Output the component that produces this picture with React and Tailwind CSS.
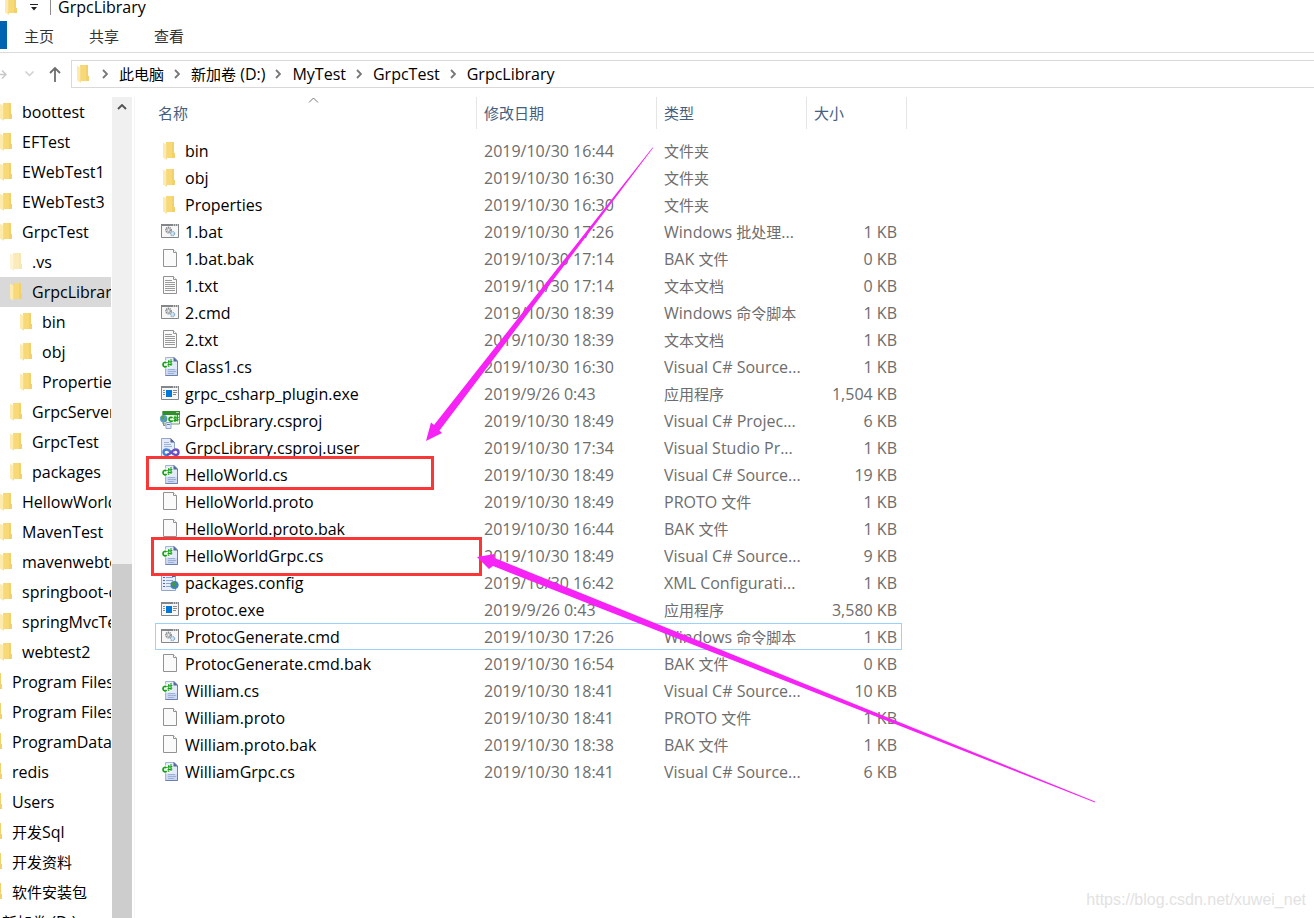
import clsx from "clsx";

const tree = [
  { name: "boottest", level: 1 },
  { name: "EFTest", level: 1 },
  { name: "EWebTest1", level: 1 },
  { name: "EWebTest3", level: 1 },
  { name: "GrpcTest", level: 1 },
  { name: ".vs", level: 2, hidden: true },
  { name: "GrpcLibrary", level: 2, selected: true },
  { name: "bin", level: 3 },
  { name: "obj", level: 3 },
  { name: "Properties", level: 3 },
  { name: "GrpcServer", level: 2 },
  { name: "GrpcTest", level: 2 },
  { name: "packages", level: 2 },
  { name: "HellowWorld", level: 1 },
  { name: "MavenTest", level: 1 },
  { name: "mavenwebtest", level: 1 },
  { name: "springboot-demo", level: 1 },
  { name: "springMvcTest", level: 1 },
  { name: "webtest2", level: 1 },
  { name: "Program Files", level: 0 },
  { name: "Program Files (x86)", level: 0 },
  { name: "ProgramData", level: 0 },
  { name: "redis", level: 0 },
  { name: "Users", level: 0 },
  { name: "开发Sql", level: 0 },
  { name: "开发资料", level: 0 },
  { name: "软件安装包", level: 0 },
  { name: "新加卷 (D:)", level: -1 },
];

const indents = {
  "-1": "-ml-[23px]",
  0: "-ml-[13px]",
  1: "-ml-[3px]",
  2: "ml-[7px]",
  3: "ml-[17px]",
};

const files = [
  { name: "bin", icon: "folder", date: "2019/10/30 16:44", type: "文件夹", size: "" },
  { name: "obj", icon: "folder", date: "2019/10/30 16:30", type: "文件夹", size: "" },
  { name: "Properties", icon: "folder", date: "2019/10/30 16:30", type: "文件夹", size: "" },
  { name: "1.bat", icon: "script", date: "2019/10/30 17:26", type: "Windows 批处理...", size: "1 KB" },
  { name: "1.bat.bak", icon: "blank", date: "2019/10/30 17:14", type: "BAK 文件", size: "0 KB" },
  { name: "1.txt", icon: "text", date: "2019/10/30 17:14", type: "文本文档", size: "0 KB" },
  { name: "2.cmd", icon: "script", date: "2019/10/30 18:39", type: "Windows 命令脚本", size: "1 KB" },
  { name: "2.txt", icon: "text", date: "2019/10/30 18:39", type: "文本文档", size: "1 KB" },
  { name: "Class1.cs", icon: "cs", date: "2019/10/30 16:30", type: "Visual C# Source...", size: "1 KB" },
  { name: "grpc_csharp_plugin.exe", icon: "exe", date: "2019/9/26 0:43", type: "应用程序", size: "1,504 KB" },
  { name: "GrpcLibrary.csproj", icon: "csproj", date: "2019/10/30 18:49", type: "Visual C# Projec...", size: "6 KB" },
  { name: "GrpcLibrary.csproj.user", icon: "user", date: "2019/10/30 17:34", type: "Visual Studio Pr...", size: "1 KB" },
  { name: "HelloWorld.cs", icon: "cs", date: "2019/10/30 18:49", type: "Visual C# Source...", size: "19 KB" },
  { name: "HelloWorld.proto", icon: "blank", date: "2019/10/30 18:49", type: "PROTO 文件", size: "1 KB" },
  { name: "HelloWorld.proto.bak", icon: "blank", date: "2019/10/30 16:44", type: "BAK 文件", size: "1 KB" },
  { name: "HelloWorldGrpc.cs", icon: "cs", date: "2019/10/30 18:49", type: "Visual C# Source...", size: "9 KB" },
  { name: "packages.config", icon: "config", date: "2019/10/30 16:42", type: "XML Configurati...", size: "1 KB" },
  { name: "protoc.exe", icon: "exe", date: "2019/9/26 0:43", type: "应用程序", size: "3,580 KB" },
  { name: "ProtocGenerate.cmd", icon: "script", date: "2019/10/30 17:26", type: "Windows 命令脚本", size: "1 KB", focused: true },
  { name: "ProtocGenerate.cmd.bak", icon: "blank", date: "2019/10/30 16:54", type: "BAK 文件", size: "0 KB" },
  { name: "William.cs", icon: "cs", date: "2019/10/30 18:41", type: "Visual C# Source...", size: "10 KB" },
  { name: "William.proto", icon: "blank", date: "2019/10/30 18:41", type: "PROTO 文件", size: "1 KB" },
  { name: "William.proto.bak", icon: "blank", date: "2019/10/30 18:38", type: "BAK 文件", size: "1 KB" },
  { name: "WilliamGrpc.cs", icon: "cs", date: "2019/10/30 18:41", type: "Visual C# Source...", size: "6 KB" },
];

const crumbs = ["此电脑", "新加卷 (D:)", "MyTest", "GrpcTest", "GrpcLibrary"];

// Chinese glyphs are set one pixel smaller than the Latin ones next to them.
function Label({ text }) {
  return text.split(/([\u4e00-\u9fff]+)/).map((part, index) =>
    index % 2 ? (
      <span key={index} className="text-[15px]">
        {part}
      </span>
    ) : (
      part
    )
  );
}

function FolderIcon({ className }) {
  return (
    <svg viewBox="0 0 20 20" className={clsx("size-5 shrink-0", className)} aria-hidden="true">
      <path d="M6 1h8v11h1v5H6z" fill="#f8d978" />
      <path d="M12 1h2v11h1v5h-3z" fill="#f2d06b" />
      <path d="M3 1.500l4 2.500v14l-1 .5-3-2z" fill="#fdebae" />
      <path d="M6 3.500l1 .5v14l-1 .5z" fill="#f8dd8a" />
    </svg>
  );
}

function Sheet({ children }) {
  return (
    <>
      <path d="M3.500 .5h10l3 3v14h-13z" fill="#fafafa" stroke="#929292" />
      <path d="M13.500 .5v3h3" fill="#fff" stroke="#929292" />
      {children}
    </>
  );
}

function WindowFrame({ children }) {
  return (
    <>
      <path d="M1.500 2.500h17v13h-17z" fill="#f7f7f7" stroke="#83878a" />
      <path d="M1 2h18v2H1z" fill="#83878a" />
      <path d="M13 3h1m1 0h1m1 0h1" stroke="#fff" />
      {children}
    </>
  );
}

const drawings = {
  script: (
    <WindowFrame>
      <circle cx="8.500" cy="8" r="2.500" fill="none" stroke="#83878a" strokeWidth="1.800" strokeDasharray="1.200 .6" />
      <circle cx="8.500" cy="8" r="1.200" fill="none" stroke="#a8a8a8" strokeWidth=".7" />
      <circle cx="12.500" cy="11.500" r="2" fill="#d9edf8" stroke="#8cb0c8" strokeWidth="1.500" strokeDasharray="1.200 .5" />
    </WindowFrame>
  ),
  exe: (
    <WindowFrame>
      <path d="M6 6h6v7H6z" fill="#0078d7" />
      <path d="M3 6.500h2m-2 2h2m-2 2h2m8-4h4m-4 2h4m-4 2h3" stroke="#8c8c8c" />
    </WindowFrame>
  ),
  blank: <Sheet />,
  text: (
    <Sheet>
      <path d="M5 4.500h7M5 6.500h10M5 8.500h10M5 10.500h10M5 12.500h10M5 14.500h10" stroke="#9a9a9a" />
    </Sheet>
  ),
  cs: (
    <>
      <path d="M5.500 .5h9l3 3v15h-12z" fill="#e3ebf9" stroke="#a5b4d6" />
      <path d="M6 12h11v6H6z" fill="#cbd8f0" />
      <path d="M17.500 4v14.500h-12" fill="none" stroke="#6a7fae" />
      <path d="M13.500 0l4.500 4.500h-4.500z" fill="#566b98" />
      <path d="M2 4l10-2v8l-10 2z" fill="#fff" opacity=".85" />
      <path d="M8 12.500h7M8 14.500h8M8 16.500h6" stroke="#9db0da" />
      <path d="M6.500 6c-1-1.200-3.500-.8-3.500 1.600s2.500 2.800 3.700 1.600" fill="none" stroke="#13a013" strokeWidth="1.700" />
      <path d="M8.800 3v7M11 2v7M7.300 5.500l5-1M7.300 8l5-1" stroke="#13a013" strokeWidth="1.100" />
    </>
  ),
  csproj: (
    <>
      <path d="M3 .5h16.500v12.500H3z" fill="#f3f8ef" stroke="#6f9a6a" />
      <path d="M2.500 0h17.500v4H2.500z" fill="#2f8f2a" />
      <path d="M16 1.500h3" stroke="#a9d4a4" />
      <path d="M12.500 7c-1-1.200-3.500-.8-3.500 1.300s2.500 2.500 3.700 1.300" fill="none" stroke="#13a013" strokeWidth="1.700" />
      <path d="M15 4.500v6.500M17.300 4v6.500M13.500 7.300l5.200-1M13.500 9.600l5.200-1" stroke="#13a013" strokeWidth="1.200" />
      <circle cx="3.700" cy="7.700" r="3.700" fill="#5b9ad6" />
      <path d="M.5 6l3-1.500 1.500 2-2.500 2.500zM5 8.500l2-1-.5 2.500-2 1z" fill="#4fa548" />
      <path d="M3.500 11.500v3h2" fill="none" stroke="#8a8a8a" />
      <path d="M6 11.500h5v6H6z" fill="#e3ebf8" stroke="#8da4cf" />
      <path d="M7 13.500h3" stroke="#5c7fc4" />
    </>
  ),
  user: (
    <>
      <path d="M1.500 .5h9l4 4v14h-13z" fill="#e4ecfa" stroke="#93a5ca" />
      <path d="M10.500 0v4.500h4.500z" fill="#50658f" />
      <path d="M4 4.500h5M4 6.500h7M4 8.500h8" stroke="#9db1da" />
      <path d="M2.500 12v5.500h16v-6.500h-12z" fill="#fff" opacity=".7" />
      <path d="M11.500 14.500c-2-2.200-3.500-3-5-3-2 0-3 1.300-3 2.700s1.200 2.800 3 2.800c1.700 0 3.200-.8 5-2.500" fill="none" stroke="#4a7fd6" strokeWidth="2.400" />
      <path d="M7 17c3-.5 5.500-5.500 8.500-5.500 1.800 0 3 1.200 3 2.800S17.300 17 15.500 17c-1.500 0-2.500-.8-4-2.500" fill="none" stroke="#6c4fc0" strokeWidth="2.400" />
    </>
  ),
  config: (
    <>
      <path d="M1.500 .5h11l3 3v14h-14z" fill="#e9effa" stroke="#93a5ca" />
      <path d="M12 0v4h4z" fill="#50658f" />
      <path d="M6 4.500h7M6 7.500h7M6 10.500h6M6 13.500h5" stroke="#8da2d4" />
      <path d="M3 4.500h2M3 7.500h2M3 10.500h2M3 13.500h2" stroke="#4d67b0" />
      <circle cx="14.500" cy="12" r="4" fill="#3b7fc4" />
      <path d="M11.500 10l4-1.500 1 2.500-2 3.500-2.500-2zM17 12l1.500-1-.5 3z" fill="#3f9a48" />
    </>
  ),
};

function FileIcon({ kind }) {
  if (kind === "folder") return <FolderIcon />;
  return (
    <svg viewBox="0 0 20 20" className="size-5 shrink-0" aria-hidden="true">
      {drawings[kind]}
    </svg>
  );
}

function Chevron({ className, d = "M1 1l4 4-4 4", box = "0 0 6 10", strokeWidth = "1.800" }) {
  return (
    <svg viewBox={box} className={clsx("shrink-0", className)} fill="none" stroke="currentColor" strokeWidth={strokeWidth} aria-hidden="true">
      <path d={d} />
    </svg>
  );
}

function TopBar() {
  return (
    <header>
      <div className="flex h-[21px] items-start text-black">
        <FolderIcon className="-mt-1 ml-0.5" />
        <svg viewBox="0 0 8 8" className="mt-1 ml-2 size-2" aria-hidden="true">
          <path d="M0 .5h8" stroke="#222" />
          <path d="M1 3h6L4 6.500z" fill="#222" />
        </svg>
        <span className="ml-3 h-[15px] w-px bg-[#8c8c8c]" />
        <h1 className="ml-[7px] leading-[14px]">GrpcLibrary</h1>
      </div>
      <div className="flex h-8 items-start border-b border-[#dadbdc]">
        <div className="h-7 w-[7px] bg-[#0063b1]" />
        <nav className="ml-[17px] flex h-[30px] items-center gap-[35px] text-[15px] text-[#333]">
          <button type="button">主页</button>
          <button type="button">共享</button>
          <button type="button">查看</button>
        </nav>
      </div>
      <div className="mb-0.5 flex h-[42px] items-center">
        <button type="button" aria-label="前进" className="w-[7px] text-[#c8c8c8]">
          <Chevron className="h-[9px] w-[7px]" box="0 0 7 9" d="M0 4.500h6M2 .5l4 4-4 4" strokeWidth="1.500" />
        </button>
        <button type="button" aria-label="最近浏览的位置" className="ml-[18px] text-[#cfcfcf]">
          <Chevron className="h-[6px] w-[9px]" box="0 0 9 6" d="M.5 .5l4 4 4-4" strokeWidth="1.500" />
        </button>
        <button type="button" aria-label="上移" className="ml-[15px] text-[#6d6d6d]">
          <Chevron className="h-4 w-3" box="0 0 12 16" d="M6 16V2M1 7l5-5 5 5" />
        </button>
        <div className="ml-2.5 flex h-7 flex-1 items-center border border-r-0 border-[#d9d9d9] pl-0.5 text-black">
          <FolderIcon className="-mr-0.5" />
          {crumbs.map((crumb) => (
            <a key={crumb} href="#" className="flex items-center">
              <Chevron className="mr-[11px] ml-2.5 h-[10px] w-[6px] text-[#777]" />
              <span>
                <Label text={crumb} />
              </span>
            </a>
          ))}
        </div>
      </div>
    </header>
  );
}

function Sidebar() {
  return (
    <aside className="flex w-[135px] shrink-0 border-r border-[#f5f5f5] text-black">
      <ul className="w-28 overflow-hidden">
        {tree.map((item, index) => (
          <li key={index} className={clsx("mr-px h-[30px] overflow-hidden", item.selected && "bg-[#d9d9d9]")}>
            <a href="#" className={clsx("flex h-full items-center gap-[5px] whitespace-nowrap", indents[item.level])}>
              <FolderIcon className={clsx(item.hidden && "opacity-50")} />
              <span>
                <Label text={item.name} />
              </span>
            </a>
          </li>
        ))}
      </ul>
      <div className="flex w-5 flex-col bg-[#f0f0f0]">
        <button type="button" aria-label="向上滚动" className="flex h-5 items-center justify-center text-[#505050]">
          <Chevron className="h-[6px] w-[10px]" box="0 0 10 6" d="M1 5l4-4 4 4" />
        </button>
        <div className="mt-[447px] flex-1 bg-[#cdcdcd]" />
      </div>
    </aside>
  );
}

function FileTable() {
  return (
    <table className="ml-5 w-[752px] table-fixed border-separate border-spacing-0 text-left">
      <colgroup>
        <col className="w-[322px]" />
        <col className="w-[180px]" />
        <col className="w-[150px]" />
        <col className="w-[95px]" />
        <col className="w-[5px]" />
      </colgroup>
      <thead className="text-[15px] text-[#44607f]">
        <tr className="h-8">
          <th className="relative border-r border-[#e5e5e5] pl-[3px] font-normal">
            名称
            <Chevron className="absolute top-0 left-[153px] h-[6px] w-[11px] text-[#777]" box="0 0 11 6" d="M1 5.500l4.500-4.500 4.500 4.500" strokeWidth="1" />
          </th>
          <th className="border-r border-[#e5e5e5] pl-[7px] font-normal">修改日期</th>
          <th className="border-r border-[#e5e5e5] pl-[7px] font-normal">类型</th>
          <th className="pl-[7px] font-normal">大小</th>
          <td className="border-r border-[#e5e5e5]" />
        </tr>
        <tr className="h-2">
          <td />
        </tr>
      </thead>
      <tbody className="text-[#6d6d6d]">
        {files.map((file) => {
          const border = file.focused ? "border-[rgb(153,209,255)]" : "border-transparent";
          return (
            <tr key={file.name} className="h-[27px] whitespace-nowrap">
              <td className={clsx("border-y border-l p-0 pl-1", border)}>
                <span className="flex h-[25px] items-center gap-[5px] text-black">
                  <FileIcon kind={file.icon} />
                  {file.name}
                </span>
              </td>
              <td className={clsx("border-y p-0 pl-[7px]", border)}>{file.date}</td>
              <td className={clsx("border-y p-0 pl-[7px]", border)}>
                <Label text={file.type} />
              </td>
              <td className={clsx("border-y border-r p-0 pr-1 text-right", border)}>{file.size}</td>
            </tr>
          );
        })}
      </tbody>
    </table>
  );
}

function Annotations() {
  return (
    <div className="pointer-events-none absolute inset-0">
      <div className="absolute top-[456px] left-[146px] h-[34px] w-72 border-3 border-[#fa3737]" />
      <div className="absolute top-[537px] left-[151px] h-[39px] w-[331px] border-3 border-[#fa3737]" />
      <svg viewBox="0 0 1314 918" className="absolute top-0 left-0 h-[918px] w-[1314px]" fill="#f622f6" aria-hidden="true">
        <path d="M426 441l5-18.500 3 2.500L652.500 147.500l.5.5L439.500 430.500l2.500 2.500z" />
        <path d="M477 557l17.500-3v4L1095 801.500v1L493 566l-4 3z" />
      </svg>
    </div>
  );
}

export default function App() {
  return (
    <div className="relative flex h-screen flex-col overflow-hidden bg-white font-['Open_Sans','Noto_Sans_CJK_SC',sans-serif] text-[16px] leading-5">
      <TopBar />
      <div className="flex min-h-0 flex-1">
        <Sidebar />
        <main className="min-w-0 flex-1">
          <FileTable />
        </main>
      </div>
      <Annotations />
      <p className="absolute right-2 bottom-2 font-['Liberation_Sans',sans-serif] text-[16px] text-[#e2e2e2]">
        https://blog.csdn.net/xuwei_net
      </p>
    </div>
  );
}
